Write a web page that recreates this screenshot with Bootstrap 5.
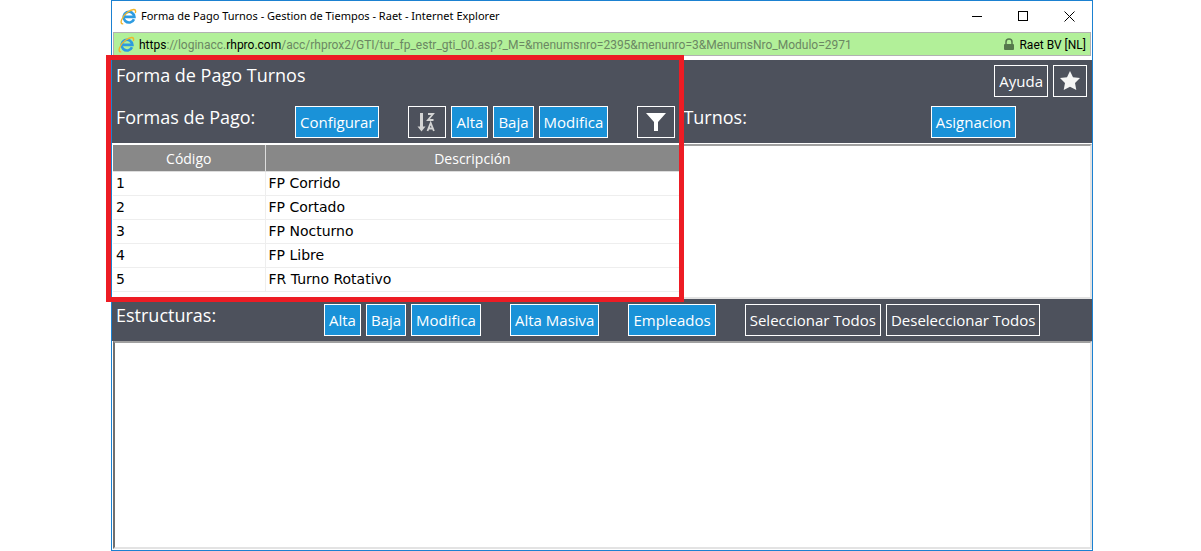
<!DOCTYPE html>
<html lang="es">
<head>
<meta charset="utf-8">
<meta name="viewport" content="width=device-width, initial-scale=1">
<title>Forma de Pago Turnos</title>
<link href="https://cdn.jsdelivr.net/npm/bootstrap@5.3.0/dist/css/bootstrap.min.css" rel="stylesheet">
<style>
body{font-family:"Open Sans",sans-serif;background:#fff;color:#000}
.desk{padding:0 108px 0 111px}
.win{border:1px solid #1b81d1;min-height:100vh}
.titlebar{height:31px;font-family:"Noto Sans",sans-serif;font-size:11px}
.winbtn{border:0;background:none;padding:0;width:46px;height:28px}
.winbtn svg{display:block;margin:auto}
.address{height:24px;margin:0 1px 4px;border:1px solid #b2b2b2;background:#b2f099;font-family:Roboto,sans-serif;font-size:12px;color:#6b8763}
.address b{font-weight:400;color:#000}
.addr-text{padding-top:2px}
.darkbar{background:#4d515c;color:#fff}
.heading{font-size:18px;line-height:22px;font-weight:400;margin:0}
.act{font-size:15px;line-height:30px;height:32px;padding:0 4px;border:1px solid #fff;border-radius:0;color:#fff;background:#4d515c}
.act:hover{background:#5d616c;color:#fff}
.act-blue{background:#1a92d8}
.act-blue:hover{background:#2aa2e8}
.act svg{display:block;margin:auto}
.act-icon{width:38px}
.act-star{width:34px}
.actions{display:flex;gap:5px}
.group-end{margin-right:24px}
.toprow{height:46px;padding:5px 5px 0 4px}
.toprow .heading{margin-top:-1px}
.secondrow{padding-bottom:5px}
.left-tools{padding:0 5px 0 4px}
.right-tools{padding-left:3px}
.asign{margin-right:76px}
.lower{padding:5px 4px}
.lower .heading{width:208px}
.main-col{flex:0 0 58%;min-width:0}
.grid-table{font-family:"DejaVu Sans",sans-serif;font-size:14px;margin:0;table-layout:fixed}
.grid-table th{font-family:"Open Sans",sans-serif;font-weight:400;font-size:14px;background:#888;color:#fff;text-align:center;height:26px;padding:0;line-height:25px;border:0;border-right:1px solid #ddd;border-bottom:1px solid #ddd}
.grid-table td{height:24px;line-height:23px;padding:0 3px;border:0;border-right:1px solid #eee;border-bottom:1px solid #eee;color:#000}
.grid-table th:first-child{width:152px}
.pane{border:2px solid;border-color:#a0a0a0 #e3e3e3 #e3e3e3 #707070;background:#fff}
.side-pane{margin:1px 0 0;border-left-width:0}
.list-area{height:156px;padding:2px 0 0 1px}
.lower-pane{margin:0 0 1px 1px}
.marked{position:absolute;left:-6px;top:-5px;bottom:-3px;width:calc(58% + 10px);border:5px solid #ed1c24;pointer-events:none}
</style>
</head>
<body>
<div class="desk">
<div class="win d-flex flex-column">
  <svg width="0" height="0" class="position-absolute" aria-hidden="true">
    <symbol id="ie" viewBox="0 0 17 17">
      <path d="M14 11.200A5.400 5.400 0 1 1 14.400 8.900H4.500" fill="none" stroke="#2d9be0" stroke-width="2.600"/>
      <path d="M3.200 15.800C-1 16.500 1.500 8.500 7.500 4.200c4.500-3.300 9.500-4.200 7.800.8" fill="none" stroke="#f0b62c" stroke-width="1.400"/>
    </symbol>
  </svg>
  <header class="titlebar d-flex align-items-center ps-2">
    <svg class="me-1" width="17" height="17" aria-hidden="true"><use href="#ie"/></svg>
    <span class="text-nowrap">Forma de Pago Turnos - Gestion de Tiempos - Raet - Internet Explorer</span>
    <div class="d-flex ms-auto">
      <button class="winbtn" aria-label="Minimizar"><svg width="11" height="11"><path d="M0 5.500h10" stroke="#000"/></svg></button>
      <button class="winbtn" aria-label="Maximizar"><svg width="11" height="11"><rect x=".5" y=".5" width="9" height="9" fill="none" stroke="#000"/></svg></button>
      <button class="winbtn" aria-label="Cerrar"><svg width="11" height="11"><path d="M.5.5l10 10M10.500.5l-10 10" stroke="#000"/></svg></button>
    </div>
  </header>
  <div class="address d-flex align-items-center px-1">
    <svg class="me-1" width="17" height="17" aria-hidden="true"><use href="#ie"/></svg>
    <span class="addr-text text-nowrap"><b>https</b>://loginacc.<b>rhpro.com</b>/acc/rhprox2/GTI/tur_fp_estr_gti_00.asp?_M=&amp;menumsnro=2395&amp;menunro=3&amp;MenumsNro_Modulo=2971</span>
    <svg class="ms-auto me-1" width="12" height="13" aria-hidden="true"><path d="M3 6V4a3 3 0 0 1 6 0v2" fill="none" stroke="#55794c" stroke-width="1.500"/><rect x="1" y="6" width="10" height="6" rx="1" fill="#55794c"/></svg>
    <b class="addr-text text-nowrap">Raet BV [NL]</b>
  </div>

  <section class="position-relative">
    <div class="darkbar">
      <div class="toprow d-flex align-items-start">
        <h1 class="heading">Forma de Pago Turnos</h1>
        <div class="actions ms-auto">
          <button class="btn act">Ayuda</button>
          <button class="btn act act-star" aria-label="Favorito"><svg width="22" height="22" viewBox="0 0 22 22"><path d="M11 1l3 6.200 7 .7-5 5 1.300 7.100-6.300-3.200L4.700 20 6 12.900l-5-5 7-.7z" fill="#f4f4f4"/></svg></button>
        </div>
      </div>
      <div class="secondrow d-flex">
        <div class="main-col left-tools d-flex align-items-start">
          <h2 class="heading">Formas de Pago:</h2>
          <div class="actions ms-auto">
            <button class="btn act act-blue group-end">Configurar</button>
            <button class="btn act act-icon" aria-label="Ordenar"><svg width="20" height="20" viewBox="0 0 20 20" fill="none" stroke="#d4d4d4"><path d="M4.500 1v14" stroke-width="3"/><path d="M0.500 14.500h8l-4 5z" fill="#d4d4d4" stroke="none"/><path d="M11 2h5l-5 6h5.500M10.500 19l3.200-8 3.200 8M12 16.500h4" stroke-width="1.800"/></svg></button>
            <button class="btn act act-blue">Alta</button>
            <button class="btn act act-blue">Baja</button>
            <button class="btn act act-blue group-end">Modifica</button>
            <button class="btn act act-icon" aria-label="Filtrar"><svg width="20" height="20" viewBox="0 0 20 20"><path d="M0 1h20l-8 9v9H8v-9z" fill="#fff"/></svg></button>
          </div>
        </div>
        <div class="right-tools flex-fill d-flex align-items-start">
          <h2 class="heading">Turnos:</h2>
          <button class="btn act act-blue ms-auto asign">Asignacion</button>
        </div>
      </div>
    </div>
    <div class="d-flex">
      <div class="main-col list-area">
        <table class="table grid-table">
          <thead><tr><th>Código</th><th>Descripción</th></tr></thead>
          <tbody>
            <tr><td>1</td><td>FP Corrido</td></tr>
            <tr><td>2</td><td>FP Cortado</td></tr>
            <tr><td>3</td><td>FP Nocturno</td></tr>
            <tr><td>4</td><td>FP Libre</td></tr>
            <tr><td>5</td><td>FR Turno Rotativo</td></tr>
          </tbody>
        </table>
      </div>
      <div class="pane side-pane flex-fill"></div>
    </div>
    <div class="marked"></div>
  </section>

  <section class="flex-fill d-flex flex-column">
    <div class="darkbar d-flex align-items-start lower">
      <h2 class="heading">Estructuras:</h2>
      <div class="actions">
        <button class="btn act act-blue">Alta</button>
        <button class="btn act act-blue">Baja</button>
        <button class="btn act act-blue group-end">Modifica</button>
        <button class="btn act act-blue group-end">Alta Masiva</button>
        <button class="btn act act-blue group-end">Empleados</button>
        <button class="btn act">Seleccionar Todos</button>
        <button class="btn act">Deseleccionar Todos</button>
      </div>
    </div>
    <div class="pane lower-pane flex-fill"></div>
  </section>
</div>
</div>
<script src="https://cdn.jsdelivr.net/npm/bootstrap@5.3.0/dist/js/bootstrap.bundle.min.js"></script>
</body>
</html>
